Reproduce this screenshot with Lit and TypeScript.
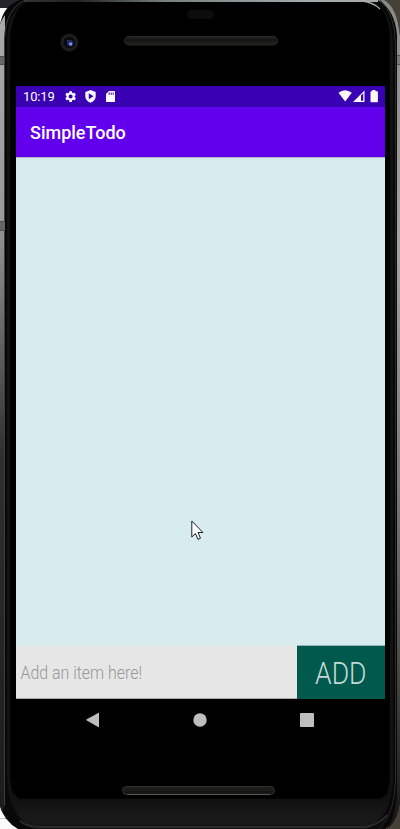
import { LitElement, html, css } from "lit";
import { customElement } from "lit/decorators.js";

@customElement("device-frame")
class DeviceFrame extends LitElement {
  static styles = css`
    :host { display: block; width: 400px; height: 829px; }
    svg { display: block; }
  `;
  render() {
    return html`<svg width="400" height="829" viewBox="0 0 400 829">
      <defs>
        <linearGradient id="left" x1="0" y1="0" x2="0" y2="1">
          <stop offset="0" stop-color="#aaa" /><stop offset=".25" stop-color="#9a9a9a" />
          <stop offset=".4" stop-color="#666" /><stop offset=".55" stop-color="#303030" />
          <stop offset="1" stop-color="#1c1c1c" />
        </linearGradient>
        <linearGradient id="right" x1="0" y1="0" x2="0" y2="1">
          <stop offset="0" stop-color="#888" /><stop offset=".3" stop-color="#a5a5a5" />
          <stop offset=".6" stop-color="#777" /><stop offset=".8" stop-color="#4a4a48" />
          <stop offset="1" stop-color="#151515" />
        </linearGradient>
        <linearGradient id="chin" x1="0" y1="0" x2="0" y2="1">
          <stop offset="0" stop-color="#000" /><stop offset=".38" stop-color="#020202" />
          <stop offset=".42" stop-color="#0d0d0d" />
          <stop offset=".85" stop-color="#222" /><stop offset="1" stop-color="#151515" />
        </linearGradient>
        <linearGradient id="rim" x1="0" y1="0" x2="1" y2="0">
          <stop offset="0" stop-color="#333" /><stop offset=".15" stop-color="#222" />
          <stop offset=".4" stop-color="#788080" /><stop offset=".8" stop-color="#a3aaac" />
          <stop offset="1" stop-color="#aaa" />
        </linearGradient>
        <pattern id="mesh" width="4" height="8" patternUnits="userSpaceOnUse">
          <rect width="4" height="8" fill="#161614" /><path d="M1 1v6M3 2v5" stroke="#24231f" />
        </pattern>
      </defs>
      <rect width="400" height="829" fill="#fbfbfd" />
      <rect width="30" height="8" fill="#24242a" />
      <path d="M370 0h30v829h-30z" fill="#454137" />
      <path d="M0 809.500h20M0 818.500h12" stroke="#c8c8c8" />
      <path d="M0 24Q4 5 20 0H378Q398 8 400 36V801Q397 821 385 829H18Q4 821 0 806Z" fill="#080808" />
      <path d="M0 24Q2 19 5 15V806L2 812L0 806Z" fill="url(#left)" />
      <path d="M4.500 805V38Q6 8 26 0" fill="none" stroke="#3c3c3c" />
      <path d="M378 0Q395 10 397 35V790Q397 813 387 829Q398 821 400 801V36Q397 7 384 0Z" fill="url(#right)" />
      <path d="M380 0Q395 13 395.500 45V780Q395 814 379 829" fill="none" stroke="#2c2c2c" />
      <path d="M7 40Q8 10 26 2H374Q392 11 393 45V782Q389 824 366 829H34Q9 820 7 778Z" fill="#121212" />
      <path d="M10 42Q11 10 27 2H372Q388 8 390 38V774Q389 799 374 805H28Q11 798 10 776Z" fill="#000" />
      <path d="M10 770Q12 798 20 799H380Q389 797 390 770Q389 821 366 829H34Q12 820 10 770Z" fill="url(#chin)" />
      <path d="M16 798.500H384V829H32Q18 820 16 798.500Z" fill="#111" opacity=".5" />
      <path d="M20 821Q27 827 40 827H366Q380 824 387 815" fill="none" stroke="#2a2a2a" stroke-width="2" />
      <rect x="24" width="354" height="2" fill="url(#rim)" />
      <path d="M361 1Q373 2 380 9" fill="none" stroke="#a6aaa8" stroke-width="1.300" />
      <path d="M0 56h4v9H0zM0 221h5v10H0z" fill="#666" />
      <path d="M0 56.500h4M0 64.500h4M0 221.500h5M0 230.500h5M397 55.500h3M397 64.500h3" stroke="#505050" />
      <rect x="397" y="56" width="3" height="8" fill="#777" />
      <rect x="187" y="10" width="27" height="9" rx="4.500" fill="#0c0c0c" />
      <circle cx="69.300" cy="42.500" r="9" fill="#1c1b1d" />
      <circle cx="69.300" cy="42.500" r="5.600" fill="#08080f" />
      <circle cx="70" cy="43" r="3.200" fill="#1e2863" />
      <circle cx="70.700" cy="44" r="1.700" fill="#7f93e8" />
      <path d="M67 40l1 1" stroke="#394b9b" />
      <rect x="124.500" y="36.500" width="153" height="8.500" rx="4.250" fill="url(#mesh)" stroke="#2b2a27" />
      <rect x="122.500" y="786.500" width="152" height="8" rx="4" fill="url(#mesh)" stroke="#33322f" />
      <path d="M127 794.500h143" stroke="#55534a" />
    </svg>`;
  }
}

@customElement("status-bar")
class StatusBar extends LitElement {
  static styles = css`
    :host { display: flex; height: 21px; align-items: center; background: #3a00b3; color: #fff; padding: 0 7px; box-sizing: border-box; }
    .time { font: 400 13px/21px Roboto, sans-serif; letter-spacing: -.15px; width: 41px; flex: none; }
    .left { flex: 1; min-width: 0; }
    .right { flex: none; }
    svg { display: block; fill: #fafaff; }
  `;
  render() {
    return html`<span class="time">10:19</span>
      <svg class="left" height="21" viewBox="64 86 273 21" preserveAspectRatio="xMinYMin meet">
        <g transform="translate(63.900 89.800) scale(.56)"><path d="M19.140 12.940c.04-.3.060-.610.060-.940s-.020-.640-.070-.940l2.030-1.580c.18-.14.23-.41.12-.61l-1.920-3.320c-.12-.22-.37-.29-.59-.22l-2.390.96c-.5-.38-1.030-.7-1.620-.94l-.36-2.540c-.04-.24-.24-.41-.48-.41h-3.840c-.24 0-.43.17-.47.41l-.36 2.540c-.59.24-1.130.57-1.620.94l-2.390-.96c-.22-.08-.47 0-.59.22L2.740 8.870c-.12.21-.08.47.12.61l2.030 1.580c-.05.3-.09.630-.09.940s.02.640.07.940l-2.030 1.580c-.18.14-.23.41-.12.61l1.920 3.320c.12.22.37.29.59.22l2.390-.96c.5.38 1.030.7 1.620.94l.36 2.540c.05.24.24.41.48.41h3.840c.24 0 .44-.17.47-.41l.36-2.540c.59-.24 1.130-.56 1.620-.94l2.390.96c.22.08.47 0 .59-.22l1.920-3.320c.12-.22.07-.47-.12-.61zM12 15.600a3.600 3.600 0 1 1 0-7.200 3.600 3.600 0 0 1 0 7.200z" /></g>
        <path fill-rule="evenodd" d="M90.500 90l5.200 2v4.300c0 3.100-2.200 5.500-5.200 6.500c-3-1-5.200-3.400-5.200-6.500V92zM88.800 93.300v6l4.700-3z" />
        <path fill-rule="evenodd" d="M109 91h5.200q.8 0 .8.800v9.400q0 .8-.8.800h-7.400q-.8 0-.8-.8V94zM108.700 92.500v2.200h1v-2.200zM110.700 92.500v2.200h1v-2.200zM112.700 92.500v2.200h1v-2.200z" />
      </svg>
      <svg class="right" width="41" height="21" viewBox="337 86 41 21">
        <path d="M338.500 92.800Q345 87.700 351.800 92.800L345.200 101.500Z" />
        <path fill-rule="evenodd" d="M353 102L364.500 90.500V102ZM361 95.500V100.800H363.200V93.300Z" />
        <path d="M372.200 90h3.200v1.300h1.800q.7 0 .7.700v9.500q0 .7-.7.700h-6q-.7 0-.7-.7V92q0-.7.700-.7h1z" />
      </svg>`;
  }
}

@customElement("nav-bar")
class NavBar extends LitElement {
  static styles = css`
    :host { display: flex; height: 42px; align-items: center; justify-content: space-between; padding: 0 71px 0 70px; box-sizing: border-box; }
    svg { display: block; fill: #bebebe; }
  `;
  render() {
    return html`
      <svg width="14" height="16"><path d="M.8 7.200L12.200.900Q13 .500 13 1.300V14.500Q13 15.300 12.200 14.900L.8 8.500Q-.3 7.900.8 7.200Z" /></svg>
      <svg width="14" height="14"><circle cx="7" cy="7" r="6.700" /></svg>
      <svg width="14" height="14"><rect width="14" height="14" rx=".8" /></svg>`;
  }
}

@customElement("app-root")
class AppRoot extends LitElement {
  static styles = css`
    :host { display: grid; width: 400px; height: 829px; overflow: hidden; }
    device-frame, .screen, .cursor { grid-area: 1 / 1; }
    .screen { margin: 86px 15px 88px 16px; display: flex; flex-direction: column; min-width: 0; }
    .title { height: 50px; flex: none; background: #6200ee; color: #fff; font: 500 18px/51px Roboto, sans-serif; padding-left: 14px; box-sizing: border-box; }
    .list { flex: 1; background: #d8ecef; box-shadow: inset 0 2px 1px -1px #aab5c2; }
    .entry { display: flex; height: 54px; flex: none; }
    .field { flex: 1; background: #e6e6e6; border-bottom: 1px solid #aaa; border-top: 1px solid #dfe5e6; box-sizing: border-box; }
    .add { width: 88px; background: #00594d; border-top: 1px solid #91b5b4; box-sizing: border-box; }
    .entry svg { display: block; }
    text { font-family: Roboto, sans-serif; font-weight: 300; }
    .hint { font-size: 18px; fill: #969696; }
    .label { font-size: 31px; fill: #c5dad7; }
    nav-bar { flex: none; }
    .cursor { margin: 520px 0 0 191px; }
  `;
  render() {
    return html`
      <device-frame></device-frame>
      <main class="screen">
        <status-bar></status-bar>
        <header class="title">SimpleTodo</header>
        <section class="list"></section>
        <div class="entry">
          <div class="field"><svg width="281" height="52"><text class="hint" x="4.500" y="33" textLength="121.500" lengthAdjust="spacingAndGlyphs">Add an item here!</text></svg></div>
          <div class="add"><svg width="88" height="53"><text class="label" x="18" y="38" textLength="51.500" lengthAdjust="spacingAndGlyphs">ADD</text></svg></div>
        </div>
        <nav-bar></nav-bar>
      </main>
      <svg class="cursor" width="14" height="21"><path d="M.800 1V17L4.400 13.600L7 19.300L9.500 18.200L7 12.500H11.900Z" fill="#fff" stroke="#172027" stroke-width="1" /></svg>`;
  }
}
